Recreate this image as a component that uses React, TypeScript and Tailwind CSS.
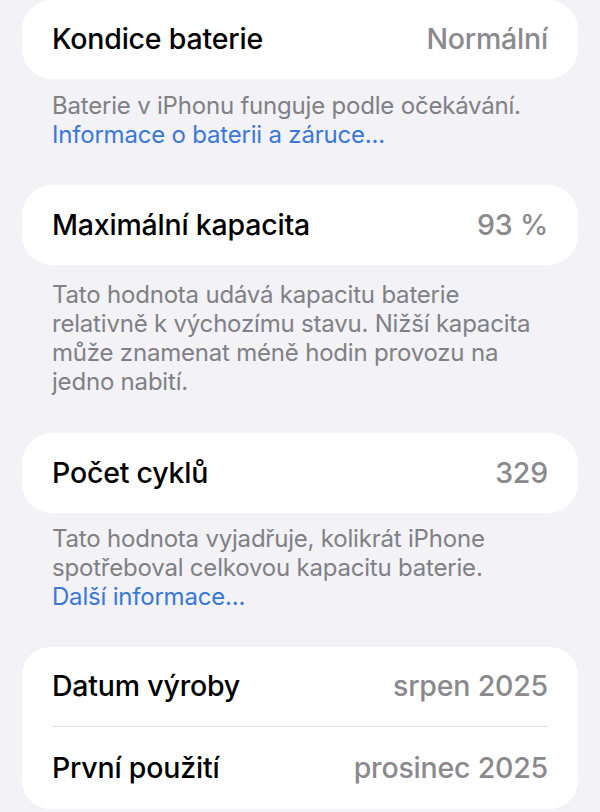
const label = "text-[28.5px] font-medium text-black tracking-[-0.2px]";
const value = "text-[28.5px] font-medium text-[#8a8a8e] tracking-[-0.2px]";
const foot = "px-[30px] text-[24px] leading-[29px] text-[#808085] tracking-[-0.2px]";

export default function App() {
  const font = { fontFamily: 'Inter, "Noto Sans", sans-serif' };
  return (
    <div className="w-[600px] h-[812px] overflow-hidden bg-[#f2f2f7] px-[22px]" style={font}>
      <div className="h-[79px] rounded-[30px] bg-white flex items-center justify-between px-[30px]">
        <span className={label}>Kondice baterie</span>
        <span className={value}>Normální</span>
      </div>
      <div className={`${foot} pt-[12px]`}>
        <p>Baterie v iPhonu funguje podle očekávání.</p>
        <p className="text-[#3a78d8]">Informace o baterii a záruce...</p>
      </div>
      <div className="mt-[36px] h-[80px] rounded-[30px] bg-white flex items-center justify-between px-[30px]">
        <span className={label}>Maximální kapacita</span>
        <span className={value}>93 %</span>
      </div>
      <div className={`${foot} pt-[15px]`}>
        <p>Tato hodnota udává kapacitu baterie relativně k výchozímu stavu. Nižší kapacita může znamenat méně hodin provozu na jedno nabití.</p>
      </div>
      <div className="mt-[37px] h-[80px] rounded-[30px] bg-white flex items-center justify-between px-[30px]">
        <span className={label}>Počet cyklů</span>
        <span className={value}>329</span>
      </div>
      <div className={`${foot} pt-[11px]`}>
        <p>Tato hodnota vyjadřuje, kolikrát iPhone spotřeboval celkovou kapacitu baterie.</p>
        <p className="text-[#3a78d8]">Další informace...</p>
      </div>
      <div className="mt-[36px] rounded-[28px] bg-white">
        <div className="h-[80px] flex items-center justify-between mx-[30px] border-b border-[#e0e0e4]">
          <span className={label}>Datum výroby</span>
          <span className={value}>srpen 2025</span>
        </div>
        <div className="h-[82px] flex items-center justify-between px-[30px]">
          <span className={label}>První použití</span>
          <span className={value}>prosinec 2025</span>
        </div>
      </div>
    </div>
  );
}
